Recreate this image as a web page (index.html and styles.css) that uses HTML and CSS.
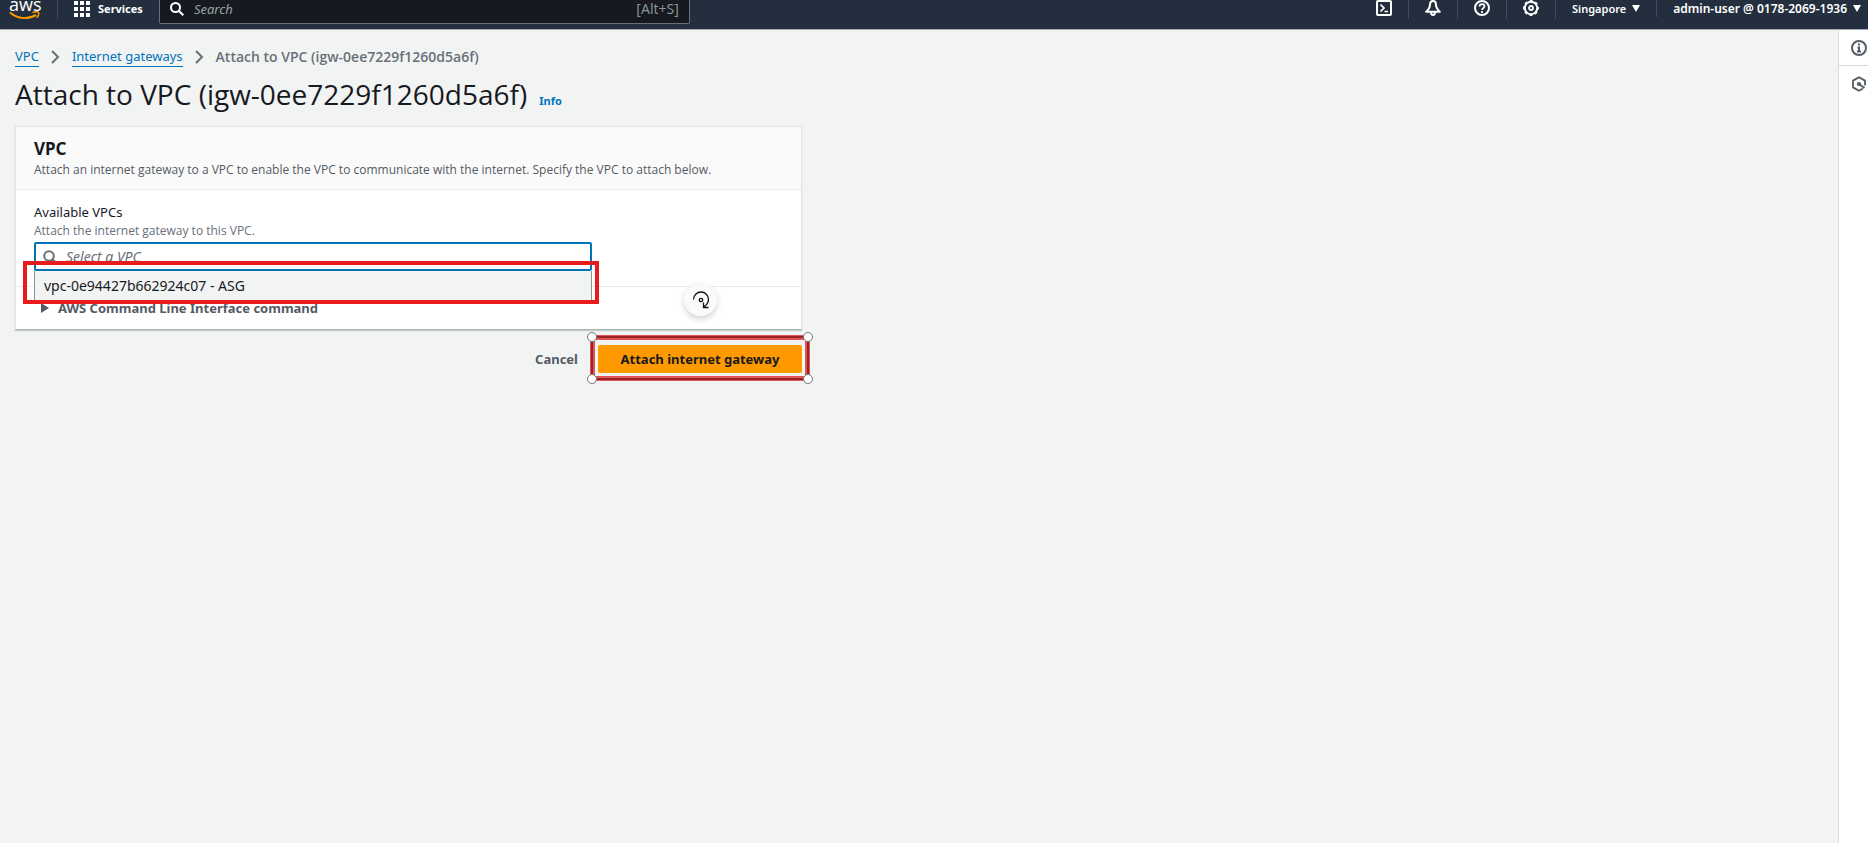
FILE: index.html
```html
<!DOCTYPE html>
<html lang="en">
<head>
<meta charset="utf-8">
<title>Attach to VPC</title>
<link rel="stylesheet" href="styles.css">
</head>
<body>
<header class="topbar">
  <a class="logo" href="#" aria-label="AWS home">
    <span class="logo-text">aws</span>
    <svg class="logo-smile" viewBox="0 0 32 9" aria-hidden="true"><path d="M1 1.500C9 8.500 20 8.500 27 3.800" fill="none" stroke="#f90" stroke-width="2"/><path d="M23.500 1.500C26 .8 29 .8 29.600 1.700C30 2.900 29 5.300 27.600 6.800" fill="none" stroke="#f90" stroke-width="1.500"/></svg>
  </a>
  <button class="services" type="button">
    <svg width="16" height="16" viewBox="0 0 16 16" fill="#fff" aria-hidden="true"><path d="M0 0h4v4H0zM6 0h4v4H6zM12 0h4v4h-4zM0 6h4v4H0zM6 6h4v4H6zM12 6h4v4h-4zM0 12h4v4H0zM6 12h4v4H6zM12 12h4v4h-4z"/></svg>
    Services
  </button>
  <label class="search">
    <svg width="14" height="14" viewBox="0 0 14 14" fill="none" stroke="#fff" stroke-width="2" aria-hidden="true"><circle cx="5.500" cy="5.500" r="4.500"/><path d="M9 9l4.300 4.300"/></svg>
    <input class="search-input" type="text" placeholder="Search" aria-label="Search">
    <span class="shortcut">[Alt+S]</span>
  </label>
  <nav class="tools">
    <button class="tool" type="button" aria-label="CloudShell"><svg width="16" height="16" viewBox="0 0 16 16" fill="none" stroke="#fff" stroke-width="2"><rect x="1" y="1" width="14" height="14" rx="1"/><path d="M4.500 4.500L8 8l-3.500 3.500M8.500 11.500H12" stroke-width="1.700"/></svg></button>
    <button class="tool" type="button" aria-label="Notifications"><svg width="16" height="16" viewBox="0 0 16 16" fill="none" stroke="#fff" stroke-width="2" stroke-linejoin="round"><path d="M8 1C6 1 5 2.500 5 5C5 8 3.500 9.500 1.200 11.800h13.600C12.500 9.500 11 8 11 5C11 2.500 10 1 8 1zM6 12.500c0 3.300 4 3.300 4 0"/></svg></button>
    <button class="tool" type="button" aria-label="Help"><svg width="16" height="16" viewBox="0 0 16 16" fill="none" stroke="#fff" stroke-width="2"><circle cx="8" cy="8" r="7"/><path d="M5.500 6.500c0-3.300 5-3.300 5 0C10.500 8 8 8 8 10M8 11v2" stroke-width="1.700"/></svg></button>
    <button class="tool" type="button" aria-label="Settings"><svg width="16" height="16" viewBox="0 0 16 16" fill="none" stroke="#fff"><circle cx="8" cy="8" r="6.200" stroke-width="2"/><circle cx="8" cy="8" r="7.400" stroke-width="1.200" stroke-dasharray="3 2.810" stroke-dashoffset="1.500"/><circle cx="8" cy="8" r="2" stroke-width="1.800"/></svg></button>
    <button class="menu" type="button">Singapore <span class="caret"></span></button>
    <button class="menu account" type="button">admin-user @ 0178-2069-1936 <span class="caret"></span></button>
  </nav>
</header>
<div class="page">
  <main class="content">
    <nav class="crumbs" aria-label="Breadcrumb">
      <a href="#">VPC</a>
      <svg width="9" height="14" viewBox="0 0 9 14" fill="none" stroke="#687078" stroke-width="2" aria-hidden="true"><path d="M1 1l6 6-6 6"/></svg>
      <a href="#">Internet gateways</a>
      <svg width="9" height="14" viewBox="0 0 9 14" fill="none" stroke="#687078" stroke-width="2" aria-hidden="true"><path d="M1 1l6 6-6 6"/></svg>
      <span class="current">Attach to VPC (igw-0ee7229f1260d5a6f)</span>
    </nav>
    <div class="heading"><h1>Attach to VPC (igw-0ee7229f1260d5a6f)</h1><a class="info" href="#">Info</a></div>
    <form class="form">
      <section class="card">
        <div class="card-head">
          <h2>VPC</h2>
          <p>Attach an internet gateway to a VPC to enable the VPC to communicate with the internet. Specify the VPC to attach below.</p>
        </div>
        <div class="card-body">
          <label class="field-label" for="vpc">Available VPCs</label>
          <p class="hint">Attach the internet gateway to this VPC.</p>
          <div class="combo">
            <svg class="combo-icon" width="13" height="13" viewBox="0 0 13 13" fill="none" stroke="#687078" stroke-width="2" aria-hidden="true"><circle cx="6" cy="6" r="4.800"/><path d="M9 9l3.500 3.500"/></svg>
            <input class="combo-input" id="vpc" type="text" placeholder="Select a VPC">
            <div class="options" role="listbox"><div class="option" role="option">vpc-0e94427b662924c07 - ASG</div></div>
            <div class="mark"></div>
          </div>
        </div>
        <div class="card-foot">
          <button class="expand" type="button"><span class="triangle"></span>AWS Command Line Interface command</button>
          <div class="rotate"><svg width="18" height="18" viewBox="0 0 18 18" fill="none" stroke="#111" stroke-width="1.300"><path d="M1.500 8.500A7.500 7.500 0 0 1 16.500 8.500C16.500 11.500 14.500 14 11.500 16.300M11.500 11.500v5h5"/><circle cx="9" cy="9" r="1.700"/></svg></div>
        </div>
      </section>
      <div class="actions">
        <button class="cancel" type="button">Cancel</button>
        <div class="selected">
          <button class="primary" type="submit">Attach internet gateway</button>
          <div class="frame"><i class="knob nw"></i><i class="knob ne"></i><i class="knob sw"></i><i class="knob se"></i></div>
        </div>
      </div>
    </form>
  </main>
  <aside class="rail">
    <button class="rail-item" type="button" aria-label="Info"><svg width="16" height="16" viewBox="0 0 16 16" fill="none" stroke="#545b64" stroke-width="2"><circle cx="8" cy="8" r="7"/><path d="M8 3.500v2M6.500 7.500H8v4M6 11.500h4"/></svg></button>
    <button class="rail-item" type="button" aria-label="Diagnostics"><svg width="16" height="16" viewBox="0 0 16 16" fill="none" stroke="#545b64" stroke-width="1.800"><path d="M14 9.500V4.600L8 1.200L2 4.600v6.800L8 14.800l4-2.300"/><circle cx="8" cy="8" r="1.200"/><path d="M8.500 8.500l5 3.500"/></svg></button>
  </aside>
</div>
</body>
</html>
```
FILE: styles.css
```css
* { box-sizing: border-box; }
body {
  margin: 0;
  min-height: 100vh;
  display: flex;
  flex-direction: column;
  background: #f2f3f3;
  color: #16191f;
  font: 13px/20px "Noto Sans", "Open Sans", sans-serif;
}
h1, h2, p { margin: 0; font-weight: 400; }
button { border: 0; padding: 0; background: none; font: inherit; color: inherit; }
a { color: #0073bb; text-decoration: none; }
svg { display: block; flex: none; }

.topbar {
  display: flex;
  align-items: flex-start;
  height: 30px;
  background: #232f3e;
  border-bottom: 1px solid #a5a8b5;
  color: #fff;
}
.logo { width: 58px; height: 19px; padding-left: 9px; border-right: 1px solid #414d5c; color: #fff; }
.logo-text { display: block; height: 11px; font: 18px/9px "Open Sans", sans-serif; }
.logo-smile { width: 32px; height: 9px; }
.services { display: flex; align-items: center; gap: 8px; height: 17px; margin-left: 16px; font-size: 11px; font-weight: 700; }
.search {
  display: flex;
  align-items: center;
  gap: 10px;
  width: 531px;
  height: 24px;
  margin-left: 16px;
  padding: 0 10px 6px;
  border: 1px solid #687078;
  border-top: 0;
  border-radius: 0 0 2px 2px;
  background: #16191f;
}
.search-input { flex: 1; min-width: 0; border: 0; padding: 0; background: none; color: #fff; font: inherit; outline: 0; }
.search-input::placeholder { color: #95a5a6; font-style: italic; opacity: 1; }
.shortcut { color: #879596; font-size: 14px; }
.tools { display: flex; margin-left: auto; }
.tool { display: flex; justify-content: center; width: 49px; height: 19px; border-right: 1px solid #414d5c; }
.menu { display: flex; align-items: center; gap: 6px; height: 17px; padding: 0 16px; font-size: 11px; font-weight: 600; }
.account { padding-right: 7px; border-left: 1px solid #414d5c; font-size: 12px; }
.caret { border: 4px solid transparent; border-top: 7px solid #fff; border-bottom: 0; }

.page { display: flex; flex: 1; }
.content { flex: 1; min-width: 0; padding: 16px 15px; }
.crumbs { display: flex; align-items: center; gap: 12px; }
.crumbs a { border-bottom: 1px solid; line-height: 20px; }
.current { color: #687078; font: 600 14px/20px "Open Sans", sans-serif; }
.heading { display: flex; align-items: baseline; gap: 12px; padding: 9px 0 14px; }
h1 { font: 28px/36px "Open Sans", sans-serif; }
.info { font-size: 11px; font-weight: 700; }
.form { max-width: 787px; }
.card { background: #fff; border: 1px solid #e3e5e5; border-bottom-color: #aab7b8; box-shadow: 0 1px 1px #c5cacb; }
.card-head { padding: 10px 18px; background: #fafafa; border-bottom: 1px solid #eaeded; }
h2 { font-size: 17px; line-height: 24px; font-weight: 700; }
.card-head p, .hint { font: 12px/18px "Open Sans", sans-serif; color: #545b64; }
.card-body { padding: 12px 18px 15px; border-bottom: 1px solid #eaeded; }
.field-label { display: block; }
.card-body .hint { margin-bottom: 2px; color: #687078; }
.combo { position: relative; width: 558px; max-width: 100%; }
.combo-input {
  display: block;
  width: 100%;
  height: 29px;
  padding: 0 30px;
  border: 2px solid #0073bb;
  border-radius: 2px;
  background: #fff;
  font: inherit;
  font-size: 14px;
  outline: 0;
}
.combo-input::placeholder { color: #687078; font-style: italic; opacity: 1; }
.combo-icon { position: absolute; top: 8px; left: 9px; }
.options { position: absolute; top: 29px; left: 0; right: 0; border: 1px solid #879596; border-width: 0 1px; background: #f2f3f3; z-index: 1; }
.option { padding: 5px 9px; font-size: 14px; line-height: 20px; }
.mark { position: absolute; top: 19px; left: -11px; right: -7px; height: 43px; border: 4px solid #e81c1c; z-index: 2; }
.card-foot { position: relative; padding: 11px 25px; }
.expand { display: flex; align-items: center; gap: 9px; color: #545b64; font-weight: 700; }
.triangle { border: 5px solid transparent; border-left: 8px solid #545b64; border-right: 0; }
.rotate {
  position: absolute;
  top: -4px;
  right: 84px;
  display: grid;
  place-items: center;
  width: 33px;
  height: 33px;
  border-radius: 50%;
  background: #fafafa;
  box-shadow: 0 3px 6px rgba(0, 0, 0, .18);
}
.actions { display: flex; justify-content: flex-end; align-items: center; gap: 20px; padding-top: 15px; }
.cancel { color: #545b64; font-weight: 700; }
.selected { position: relative; }
.primary { display: block; width: 204px; height: 28px; border-radius: 2px; background: #f90; color: #16191f; font-weight: 700; }
.frame { position: absolute; inset: -10px -8px -8px; border: 5px solid #df5555; }
.frame::before { content: ""; position: absolute; inset: -4px; border: 2px solid #9c2227; }
.knob { position: absolute; width: 10px; height: 10px; border: 1px solid #777; border-radius: 50%; background: #fff; z-index: 1; }
.nw { top: -8px; left: -8px; }
.ne { top: -8px; right: -8px; }
.sw { bottom: -8px; left: -8px; }
.se { bottom: -8px; right: -8px; }

.rail { width: 30px; background: #fff; border-left: 1px solid #d5dbdb; }
.rail-item { display: flex; align-items: center; justify-content: flex-end; width: 100%; height: 36px; padding-right: 1px; border-bottom: 1px solid #d5dbdb; }
.rail-item:last-child { border-bottom: 0; }
```
